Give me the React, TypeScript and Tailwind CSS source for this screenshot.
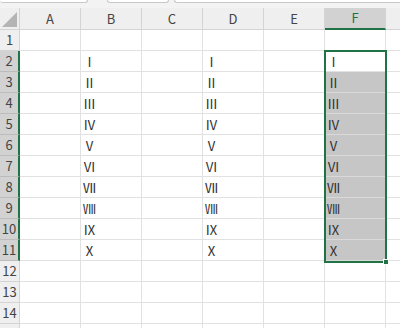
import React from 'react'

const cols = ['A', 'B', 'C', 'D', 'E', 'F']
const numerals = ['Ⅰ', 'Ⅱ', 'Ⅲ', 'Ⅳ', 'Ⅴ', 'Ⅵ', 'Ⅶ', 'Ⅷ', 'Ⅸ', 'Ⅹ']
const rows = Array.from({ length: 14 }, (_, i) => i + 1)

function cellValue(row: number, col: string) {
  if (row < 2 || row > 11) return ''
  if (col === 'B' || col === 'D' || col === 'F') return numerals[row - 2]
  return ''
}

export default function App() {
  return (
    <div
      className="relative h-[328px] w-[400px] overflow-hidden bg-white text-[#333]"
      style={{ fontFamily: '"Noto Sans CJK JP", "Noto Sans", sans-serif' }}
    >
      {/* ribbon remnants */}
      <div className="flex h-[8px] gap-[5px] bg-[#f3f3f3]">
        <div className="h-[3px] w-[88px] rounded-b-[3px] border-b border-r border-[#c8c8c8] bg-white" />
        <div className="ml-[14px] h-[3px] w-[62px] rounded-b-[3px] border-x border-b border-[#c8c8c8] bg-white" />
        <div className="h-[3px] flex-1 rounded-bl-[3px] border-b border-l border-[#c8c8c8] bg-white" />
      </div>

      {/* column header */}
      <div className="flex h-[22px] bg-[#efefef]">
        <div className="relative w-[20px] shrink-0 border-r border-b border-[#d4d4d4]">
          <div className="absolute bottom-[2px] right-[2px] h-0 w-0 border-b-[15px] border-l-[15px] border-b-[#b4b4b4] border-l-transparent" />
        </div>
        {cols.map((c) =>
          c === 'F' ? (
            <div
              key={c}
              className="flex w-[61px] shrink-0 items-center justify-center border-r border-b-2 border-r-[#d4d4d4] border-b-[#217346] bg-[#d2d2d2] text-[13px] text-[#217346]"
            >
              {c}
            </div>
          ) : (
            <div
              key={c}
              className="flex w-[61px] shrink-0 items-center justify-center border-r border-b border-[#d4d4d4] text-[13px] text-[#444]"
            >
              {c}
            </div>
          )
        )}
        <div className="flex-1 border-b border-[#d4d4d4]" />
      </div>

      {/* rows */}
      {rows.map((r) => {
        const sel = r >= 2 && r <= 11
        return (
          <div key={r} className="flex h-[21px]">
            <div
              className={
                sel
                  ? 'flex w-[20px] shrink-0 items-center justify-center border-b border-r-2 border-b-[#bcbcbc] border-r-[#217346] bg-[#d2d2d2] text-[13px] text-[#444]'
                  : 'flex w-[20px] shrink-0 items-center justify-center border-b border-r border-[#d4d4d4] bg-[#efefef] text-[13px] text-[#444]'
              }
            >
              {r}
            </div>
            {cols.map((c) => {
              const shaded = c === 'F' && r >= 3 && r <= 11
              return (
                <div
                  key={c}
                  className={
                    shaded
                      ? 'flex w-[61px] shrink-0 items-center border-r border-b border-[#d9d9d9] bg-[#c6c6c6] pl-[2px] text-[13px] leading-none'
                      : 'flex w-[61px] shrink-0 items-center border-r border-b border-[#e1e1e1] pl-[2px] text-[13px] leading-none'
                  }
                >
                  {cellValue(r, c)}
                </div>
              )
            })}
            <div className="flex-1 border-b border-[#e1e1e1]" />
          </div>
        )
      })}

      {/* partial next row */}
      <div className="flex h-[21px]">
        <div className="w-[20px] shrink-0 border-r border-[#d4d4d4] bg-[#efefef]" />
        {cols.map((c) => (
          <div key={c} className="w-[61px] shrink-0 border-r border-[#e1e1e1]" />
        ))}
      </div>

      {/* selection outline */}
      <div className="absolute left-[324px] top-[50px] h-[213px] w-[63px] border-2 border-[#217346]" />
      <div className="absolute left-[383px] top-[259px] h-[6px] w-[6px] border border-white bg-[#217346]" />
    </div>
  )
}
